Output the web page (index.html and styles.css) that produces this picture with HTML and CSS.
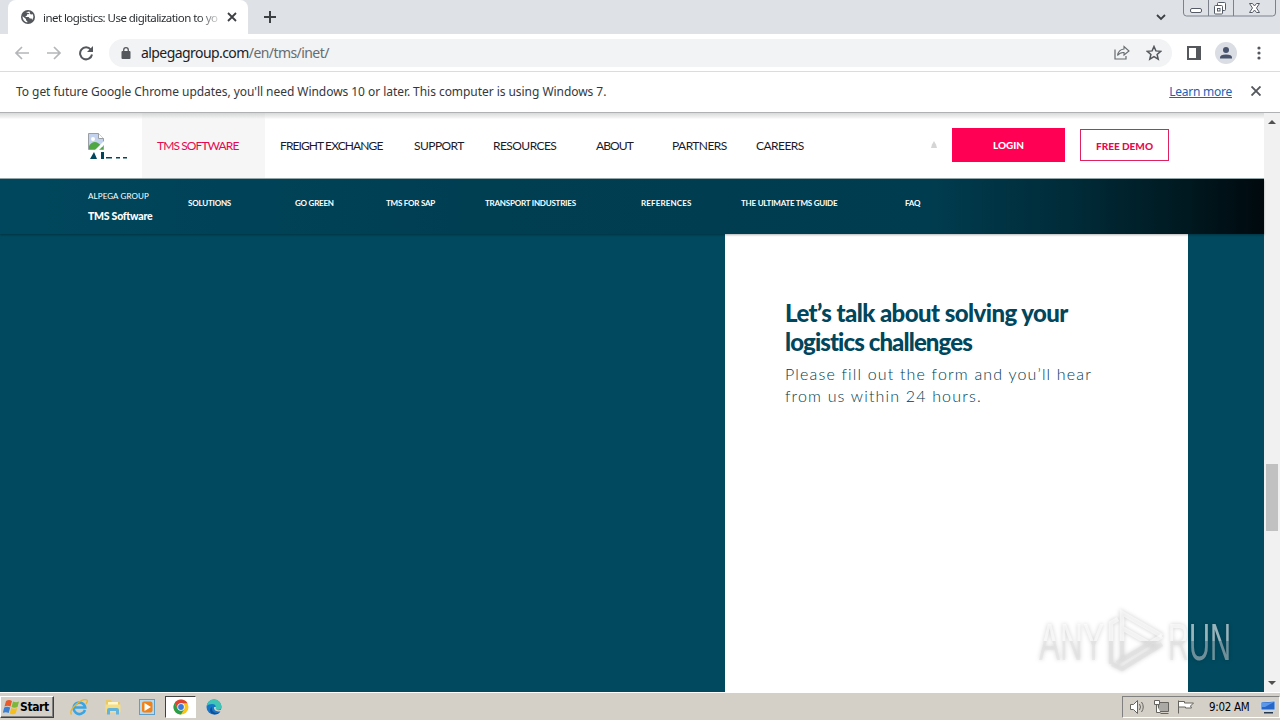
FILE: index.html
```html
<!DOCTYPE html>
<html lang="en">
  <head>
    <meta charset="UTF-8" />
    <meta name="viewport" content="width=device-width, initial-scale=1.0" />
    <title>inet logistics: Use digitalization to your advantage</title>
    <link rel="stylesheet" href="styles.css">
  </head>
  <body>
    <!-- Tab strip -->
    <div class="tabstrip">
      <div class="tab">
        <svg class="globe" width="14" height="14" viewBox="0 0 14 14">
          <circle cx="7" cy="7" r="7" fill="#54585d" />
          <path d="M1.6 6.2 5 9v1.2l1.3 1v1.3A5.6 5.6 0 0 1 1.6 6.2zM5 2.2 8.3 1.5l.8 1.4-1.6 1.3H6v1.3L4.6 6.2v.8h3l1.3 1.6h1.7l.7 1.3a5.6 5.6 0 0 0 .6-5.7l-2 .3-1-1" fill="#fff" />
        </svg>
        <span class="tab-title">inet logistics: Use digitalization to yo</span>
        <svg class="tab-close" width="10" height="10" viewBox="0 0 10 10">
          <path d="M1 1l8 8M9 1L1 9" stroke="#3c4043" stroke-width="1.8" />
        </svg>
      </div>
      <svg class="new-tab" width="12" height="12" viewBox="0 0 12 12">
        <path d="M6 0v12M0 6h12" stroke="#3c4043" stroke-width="2" />
      </svg>
      <svg class="tab-search" width="10" height="7" viewBox="0 0 10 7">
        <path d="M1 1l4 4 4-4" fill="none" stroke="#3c4043" stroke-width="1.8" />
      </svg>
      <svg class="window-buttons" width="94" height="18" viewBox="0 0 94 18">
        <path d="M.5 0v13q0 3 3 3h86q3 0 3-3V0M25.500 0v16M50.500 0v16" fill="none" stroke="#7c828c" />
        <g fill="#fff" stroke="#555b66">
          <rect x="7.500" y="8.500" width="11" height="4" rx="1.500" />
          <rect x="34.500" y="2.500" width="8" height="8" rx="1" />
          <rect x="31.500" y="5.500" width="8" height="8.500" rx="1" />
          <rect x="34.500" y="8.500" width="2.500" height="2.500" />
          <path d="M66.500 3.500h3l2 2.500 2-2.500h3L73.500 8l3 4.500h-3l-2-2.500-2 2.500h-3l3-4.500z" />
        </g>
      </svg>
    </div>

    <!-- Toolbar -->
    <div class="toolbar">
      <svg class="nav-icons" width="80" height="16" viewBox="0 0 80 16">
        <g fill="none" stroke="#b4b6b9" stroke-width="1.700">
          <path d="M15 8H2M8 2L2 8l6 6" />
          <path d="M33 8h13M40 2l6 6-6 6" />
        </g>
        <path d="M76.800 4.600A6 6 0 1 0 78 9.500" fill="none" stroke="#54585d" stroke-width="2" />
        <path d="M79 1v6h-6z" fill="#54585d" />
      </svg>
      <div class="omnibox">
        <svg width="10" height="12" viewBox="0 0 10 12">
          <rect x="0.500" y="4" width="9" height="8" rx="1" fill="#54585d" />
          <path d="M2.700 5V3a2.300 2.300 0 0 1 4.600 0v2" fill="none" stroke="#54585d" stroke-width="1.300" />
        </svg>
        <div class="url">alpegagroup.com<span>/en/tms/inet/</span></div>
        <svg class="share" width="16" height="15" viewBox="0 0 16 15">
          <path d="M1 4.500V14h11v-3" fill="none" stroke="#686c70" stroke-width="1.200" />
          <path d="M3.500 10.500Q4.500 4.500 10 4V1.500L15 6l-5 4V7.500Q6 7.200 3.500 10.500z" fill="none" stroke="#686c70" stroke-width="1.100" />
        </svg>
        <svg class="star" width="16" height="16" viewBox="0 0 16 16">
          <path d="M8 1.500l1.900 4.400 4.800.4-3.600 3.200 1.100 4.700L8 11.700l-4.200 2.500 1.100-4.700L1.300 6.300l4.800-.4z" fill="none" stroke="#54585d" stroke-width="1.500" />
        </svg>
      </div>
      <svg class="side-panel" width="14" height="14" viewBox="0 0 14 14">
        <path d="M1 1h12v12H1z" fill="none" stroke="#54585d" stroke-width="2" />
        <path d="M9 1h4v12H9z" fill="#54585d" />
      </svg>
      <svg class="profile" width="22" height="22" viewBox="0 0 22 22">
        <circle cx="11" cy="11" r="11" fill="#dadde3" />
        <circle cx="11" cy="8" r="3" fill="#47536d" />
        <path d="M5 16.500v-1q0-3 6-3t6 3v1z" fill="#47536d" />
      </svg>
      <svg class="menu" width="4" height="14" viewBox="0 0 4 14">
        <g fill="#54585d">
          <circle cx="2" cy="2" r="1.600" />
          <circle cx="2" cy="7" r="1.600" />
          <circle cx="2" cy="12" r="1.600" />
        </g>
      </svg>
    </div>

    <!-- Update info bar -->
    <div class="infobar">
      <span class="info-text">To get future Google Chrome updates, you'll need Windows 10 or later. This computer is using Windows 7.</span>
      <a class="learn-more">Learn more</a>
      <svg width="10" height="10" viewBox="0 0 10 10">
        <path d="M.5.500l9 9M9.500.500l-9 9" stroke="#54585d" stroke-width="1.900" />
      </svg>
    </div>

    <div class="viewport">
      <div class="page">
        <!-- Main header -->
        <header class="header">
          <div class="logo">
            <svg width="16" height="17" viewBox="0 0 16 17">
              <path d="M.5.500h10l5 5v11H.5z" fill="#c3d3ef" stroke="#9a9fa5" />
              <path d="M10.500.500v5h5" fill="#fff" stroke="#9a9fa5" />
              <path d="M1 16v-3q4-6 9-3l5 4v2z" fill="#4fa744" />
              <path d="M7 17l9-9v4l-5 5z" fill="#fff" />
              <circle cx="5" cy="6" r="2" fill="#fff" />
            </svg>
            <svg class="logo-alt" width="40" height="9" viewBox="0 0 40 9">
              <path d="M2 9l4-7 3 7zM13 2h3v7h-3zM18 7h6v1.500h-6zM28 7h4v1.500h-4zM35 7h4v1.500h-4z" fill="#00465c" />
            </svg>
          </div>
          <nav class="main-nav">
            <a class="active tight">TMS SOFTWARE</a>
            <a class="tight">FREIGHT EXCHANGE</a>
            <a>SUPPORT</a>
            <a>RESOURCES</a>
            <a class="tight">ABOUT</a>
            <a>PARTNERS</a>
            <a>CAREERS</a>
          </nav>
          <svg class="lang" width="6" height="7" viewBox="0 0 6 7">
            <path d="M3 0l2 3.500L6 7H0l1-3.500z" fill="#d5d5d5" />
          </svg>
          <a class="btn login">LOGIN</a>
          <a class="btn demo">FREE DEMO</a>
        </header>

        <!-- Sub navigation -->
        <div class="subnav">
          <div class="brand">
            <div class="brand-group">ALPEGA GROUP</div>
            <div class="brand-name">TMS Software</div>
          </div>
          <nav class="sub-links">
            <a>SOLUTIONS</a>
            <a>GO GREEN</a>
            <a>TMS FOR SAP</a>
            <a>TRANSPORT INDUSTRIES</a>
            <a class="wide">REFERENCES</a>
            <a>THE ULTIMATE TMS GUIDE</a>
            <a>FAQ</a>
          </nav>
        </div>

        <section class="content">
          <div class="form-card">
            <h2>Let’s talk about solving your<br><span>logistics challenges</span></h2>
            <p>Please fill out the form and you’ll hear<br>from us within 24 hours.</p>
          </div>
        </section>
      </div>

      <div class="scrollbar">
        <div class="arrow up"></div>
        <div class="thumb"></div>
        <div class="arrow down"></div>
      </div>
    </div>

    <!-- Windows taskbar -->
    <div class="taskbar">
      <div class="start">
        <svg width="17" height="16" viewBox="0 0 17 16">
          <path d="M3 2q3-2 6 0L7.500 7.500q-3-1.500-6 0z" fill="#e8592b" />
          <path d="M10 2.500q3 1.500 6 0L14.500 8q-3 1.500-6 0z" fill="#7cb63a" />
          <path d="M1.200 8.500q3-1.500 6 0L5.700 14q-3-1.700-6 0z" fill="#3c7fd0" />
          <path d="M8.200 9q3 1.500 6 0l-1.500 5.500q-3 1.500-6 0z" fill="#f6be1d" />
        </svg>
        <span>Start</span>
      </div>
      <div class="launch">
        <svg width="18" height="18" viewBox="0 0 18 18">
          <path d="M15 12A5.800 5.800 0 1 1 15.200 9.500H5" fill="none" stroke="#3aa5e4" stroke-width="2.600" />
          <path d="M1.500 16.500Q-1 13 6 6.500T17 2q1 1.500-1 4" fill="none" stroke="#e8b52c" stroke-width="1.300" />
        </svg>
      </div>
      <div class="launch">
        <svg width="18" height="18" viewBox="0 0 18 18">
          <path d="M2 2h5l1 2h8v8H2z" fill="#e9c965" />
          <path d="M4 4h10v4H4z" fill="#fff6c9" />
          <path d="M1.500 6.500h15v8h-15z" fill="#f5dd85" />
          <path d="M3 16.500V12q0-2 2-2h8q2 0 2 2v4.500h-3V13H6v3.500z" fill="#63b4dd" />
        </svg>
      </div>
      <div class="launch">
        <svg width="18" height="18" viewBox="0 0 18 18">
          <rect x="1.500" y="1.500" width="15" height="15" fill="#b5d9ef" stroke="#5e9fc9" />
          <rect x="4" y="3.500" width="10.500" height="11" rx="2" fill="#f08218" />
          <path d="M6.500 5v8L13 9z" fill="#fff" />
        </svg>
      </div>
      <div class="launch running">
        <svg width="16" height="16" viewBox="0 0 16 16">
          <circle cx="8" cy="8" r="7.500" fill="#f9c41c" />
          <path d="M1.500 4.250A7.500 7.500 0 0 1 14.500 4.250H8L4.750 9.900z" fill="#dd4434" />
          <path d="M1.500 4.250A7.500 7.500 0 0 0 8 15.500l3.250-5.600H4.750z" fill="#2a9d4d" />
          <circle cx="8" cy="8" r="3.700" fill="#fff" />
          <circle cx="8" cy="8" r="2.900" fill="#3f78dc" />
        </svg>
      </div>
      <div class="launch">
        <svg width="16" height="16" viewBox="0 0 16 16">
          <circle cx="8" cy="8" r="7.500" fill="#1477c8" />
          <path d="M.6 7A7.500 7.500 0 0 1 15.500 7q.5 4-4.500 4-2.500 0-1.500-2Q10.500 5 6 5 2.500 5 .6 7z" fill="#40c5b5" />
          <path d="M6 8q-1 5 4 6 3 0 4.500-2-1.500 3.500-6 3.500Q4 14.500 4 11q0-2 2-3z" fill="#124f99" />
          <path d="M8 8q-.5 4 4.500 4.500l3.500-.5V10q-3 2-5.500.8Q9.300 9.800 10 8z" fill="#d6d1c8" />
        </svg>
      </div>
      <div class="tray">
        <svg width="66" height="18" viewBox="0 0 66 18">
          <g fill="#fff" stroke="#66645f">
            <path d="M1.500 6.500h3l4-4v13l-4-4h-3z" />
            <path d="M10.500 6q2 3 0 6M12.500 4q3.500 5 0 10" fill="none" />
            <path d="M29.500 4.500h10v9h-10z" fill="#aaa9a5" />
            <path d="M25.500 2.500h5v4h-5zM27.500 6.500v8h4M31.500 15.500h8" />
            <path d="M49.500 2.500v13M49.500 3.500h6v1.500h9l-3 3 1 2h-6v-1h-7z" />
          </g>
        </svg>
        <span class="clock">9:02 AM</span>
        <svg width="16" height="14" viewBox="0 0 16 14">
          <path d="M1 2l14-1v9H1z" fill="#2566c8" stroke="#c4dcf5" />
          <path d="M2 3l12-1-9 5H2z" fill="#5c98e8" />
          <path d="M4 12h9v1.500H4z" fill="#25384f" />
        </svg>
      </div>
    </div>

    <svg class="watermark" width="200" height="70" viewBox="0 0 200 70">
      <defs>
        <linearGradient id="fade" gradientUnits="userSpaceOnUse" x1="0" y1="0" x2="0" y2="70">
          <stop offset="0.48" stop-color="#fff" stop-opacity="0.6" />
          <stop offset="0.48" stop-color="#dedede" stop-opacity="0.5" />
        </linearGradient>
      </defs>
      <g class="wm-shape" fill="url(#fade)">
        <text x="3" y="53" textLength="65" lengthAdjust="spacingAndGlyphs">ANY</text>
        <text x="132" y="53" textLength="63" lengthAdjust="spacingAndGlyphs">RUN</text>
        <g fill="none" stroke="url(#fade)" stroke-width="4.500">
          <path d="M86 53V6l40 23M86 21l35 20" />
          <path d="M75 57V16l7-4" />
          <path d="M126 29L81 56M126 37L86 62l-10-5" />
        </g>
      </g>
    </svg>
  </body>
</html>
```

FILE: styles.css
```css
body {
  display: flex;
  flex-direction: column;
  width: 1280px;
  height: 720px;
  margin: 0;
  overflow: hidden;
  position: relative;
  font-family: "DejaVu Sans Condensed", "Noto Sans", sans-serif;
  background: #fff;
}

* {
  box-sizing: border-box;
}

svg {
  flex: none;
}

span,
a {
  white-space: nowrap;
}

/* Browser chrome */
.tabstrip {
  display: flex;
  height: 34px;
  flex: none;
  background: #dee1e6;
}

.tab {
  display: flex;
  align-items: center;
  width: 240px;
  margin-left: 8px;
  padding: 0 11px 0 13px;
  border-radius: 8px 8px 0 0;
  background: #fff;
}

.tab-title {
  width: 176px;
  margin-left: 8px;
  overflow: hidden;
  font-family: "Noto Sans", sans-serif;
  font-size: 11.5px;
  letter-spacing: -0.55px;
  color: #2c3033;
  -webkit-mask-image: linear-gradient(to right, #000 155px, transparent 180px);
  mask-image: linear-gradient(to right, #000 155px, transparent 180px);
}

.tab-close {
  margin-left: 8px;
}

.new-tab {
  margin: 11px 0 0 16px;
}

.tab-search {
  margin: 14px 17px 0 auto;
}

.window-buttons {
  margin-right: 3px;
}

.toolbar {
  display: flex;
  align-items: center;
  height: 38px;
  flex: none;
  padding: 0 19px 0 14px;
  border-bottom: 1px solid #dadce0;
}

.omnibox {
  display: flex;
  align-items: center;
  width: 1063px;
  height: 28px;
  margin-left: 15px;
  padding: 0 10px 0 12px;
  border-radius: 14px;
  background: #f1f3f4;
}

.url {
  margin-left: 10px;
  font-family: "Noto Sans", sans-serif;
  font-size: 14px;
  letter-spacing: -0.57px;
  color: #202124;
}

.url span {
  color: #686c70;
}

.share {
  margin-left: auto;
}

.star {
  margin-left: 16px;
}

.side-panel {
  margin-left: 15px;
}

.profile {
  margin-left: 14px;
}

.menu {
  margin-left: auto;
}

.infobar {
  display: flex;
  align-items: center;
  height: 41px;
  flex: none;
  padding: 0 19px 2px 16px;
  border-bottom: 1px solid #b0b1b2;
  font-family: "Noto Sans", sans-serif;
  font-size: 12px;
  letter-spacing: -0.05px;
  color: #35383b;
}

.learn-more {
  margin: 0 19px 0 auto;
  letter-spacing: -0.25px;
  color: #1a62b5;
  text-decoration: underline;
}

/* Site */
.viewport {
  display: flex;
  height: 579px;
  flex: none;
}

.page {
  display: flex;
  flex-direction: column;
  width: 1264px;
  font-family: Lato, sans-serif;
}

.header {
  display: flex;
  height: 66px;
  flex: none;
  background: linear-gradient(#d8d9d9, #f5f5f5 5px, #fff 6px);
  border-bottom: 1px solid #95a9ad;
}

.logo {
  width: 54px;
  margin-left: 88px;
  padding-top: 20px;
}

.logo svg {
  display: block;
}

.main-nav {
  display: grid;
  grid-template-columns: 123px 134px 79px 103px 76px 84px 80px;
  width: 679px;
  font-size: 12px;
  letter-spacing: -0.55px;
  color: #1c1a2a;
}

.main-nav a {
  padding: 25px 0 0 15px;
}

.main-nav .active {
  background: linear-gradient(#d4d5d5, #f0f0f0 5px, #f6f6f6 6px);
  color: #e5094f;
}

.main-nav .tight {
  letter-spacing: -0.9px;
}

.lang {
  margin: 28px 0 0 110px;
}

.btn {
  font-size: 10px;
  font-weight: 900;
  text-align: center;
}

.login {
  width: 113px;
  height: 34px;
  margin: 15px 0 0 15px;
  line-height: 34px;
  background: #ff0055;
  color: #fff;
}

.demo {
  width: 89px;
  height: 32px;
  margin: 16px 0 0 15px;
  line-height: 32px;
  border: 1px solid #e0215f;
  color: #e5094f;
}

.subnav {
  display: flex;
  height: 55px;
  flex: none;
  color: #fff;
  background: linear-gradient(to right, #00475d 0, #003e52 500px, #003c4f 930px, #002a37 1080px, #00181f 1190px, #00090e 1264px);
  box-shadow: 0 1px 2px rgba(0, 0, 0, 0.3);
  z-index: 1;
}

.brand {
  width: 85px;
  margin-left: 88px;
  padding-top: 12px;
}

.brand-group {
  font-size: 8px;
  line-height: 10px;
  letter-spacing: 0.1px;
}

.brand-name {
  margin-top: 9px;
  font-size: 10.5px;
  line-height: 12px;
  font-weight: 900;
  letter-spacing: -0.25px;
}

.sub-links {
  display: grid;
  grid-template-columns: 107px 91px 99px 156px 100px 164px 50px;
  padding: 19px 0 0 15px;
  font-size: 8px;
  line-height: 10px;
  font-weight: 700;
  letter-spacing: -0.22px;
}

.sub-links .wide {
  letter-spacing: 0.15px;
}

.content {
  display: flex;
  flex: 1;
  background: #00495e;
}

.form-card {
  width: 463px;
  margin-left: 725px;
  padding: 64px 60px 0;
  background: #fff;
  color: #00465c;
}

.form-card h2 {
  margin: 0;
  font-size: 24px;
  line-height: 29px;
  font-weight: 900;
  letter-spacing: -0.57px;
}

.form-card h2 span {
  letter-spacing: -0.9px;
}

.form-card p {
  margin: 7px 0 0;
  font-size: 16px;
  line-height: 22px;
  font-weight: 300;
  letter-spacing: 1.17px;
  color: #003a4d;
}

.scrollbar {
  display: flex;
  flex-direction: column;
  align-items: center;
  width: 16px;
  background: #f1f1f1;
}

.arrow {
  border: 4px solid transparent;
}

.up {
  margin-top: 3px;
  border-bottom-color: #505050;
}

.down {
  margin: auto 0 3px;
  border-top-color: #505050;
}

.thumb {
  width: 12px;
  height: 67px;
  margin-top: 340px;
  background: #c1c1c1;
}

/* Taskbar */
.taskbar {
  display: flex;
  align-items: center;
  height: 28px;
  flex: none;
  background: #d4d0c8;
  border-top: 1px solid #fff;
}

.start {
  display: flex;
  align-items: center;
  width: 54px;
  height: 22px;
  margin-right: 11px;
  padding-left: 2px;
  border: 1px solid;
  border-color: #fff #404040 #404040 #fff;
  box-shadow: inset -1px -1px #808080;
  font-size: 12px;
  font-weight: bold;
  letter-spacing: -0.4px;
}

.launch {
  display: flex;
  align-items: center;
  justify-content: center;
  width: 28px;
  height: 22px;
  margin-right: 6px;
}

.running {
  width: 31px;
  margin: 0 4px 0 -2px;
  background: #fff;
  border: 1px solid;
  border-color: #404040 #fff #fff #404040;
}

.tray {
  display: flex;
  align-items: center;
  width: 158px;
  height: 22px;
  margin-left: auto;
  padding-left: 6px;
  border: 1px solid;
  border-color: #808080 #fff #fff #808080;
}

.clock {
  width: 41px;
  margin: 0 10px 0 14px;
  font-size: 11.5px;
  letter-spacing: -0.3px;
}

.watermark {
  position: absolute;
  left: 1036px;
  top: 607px;
  overflow: visible;
  font-family: "Liberation Sans Narrow", "Liberation Sans", sans-serif;
  font-size: 51px;
}

.wm-shape {
  filter: drop-shadow(0 0 2px rgba(0, 0, 0, 0.3));
}
```
